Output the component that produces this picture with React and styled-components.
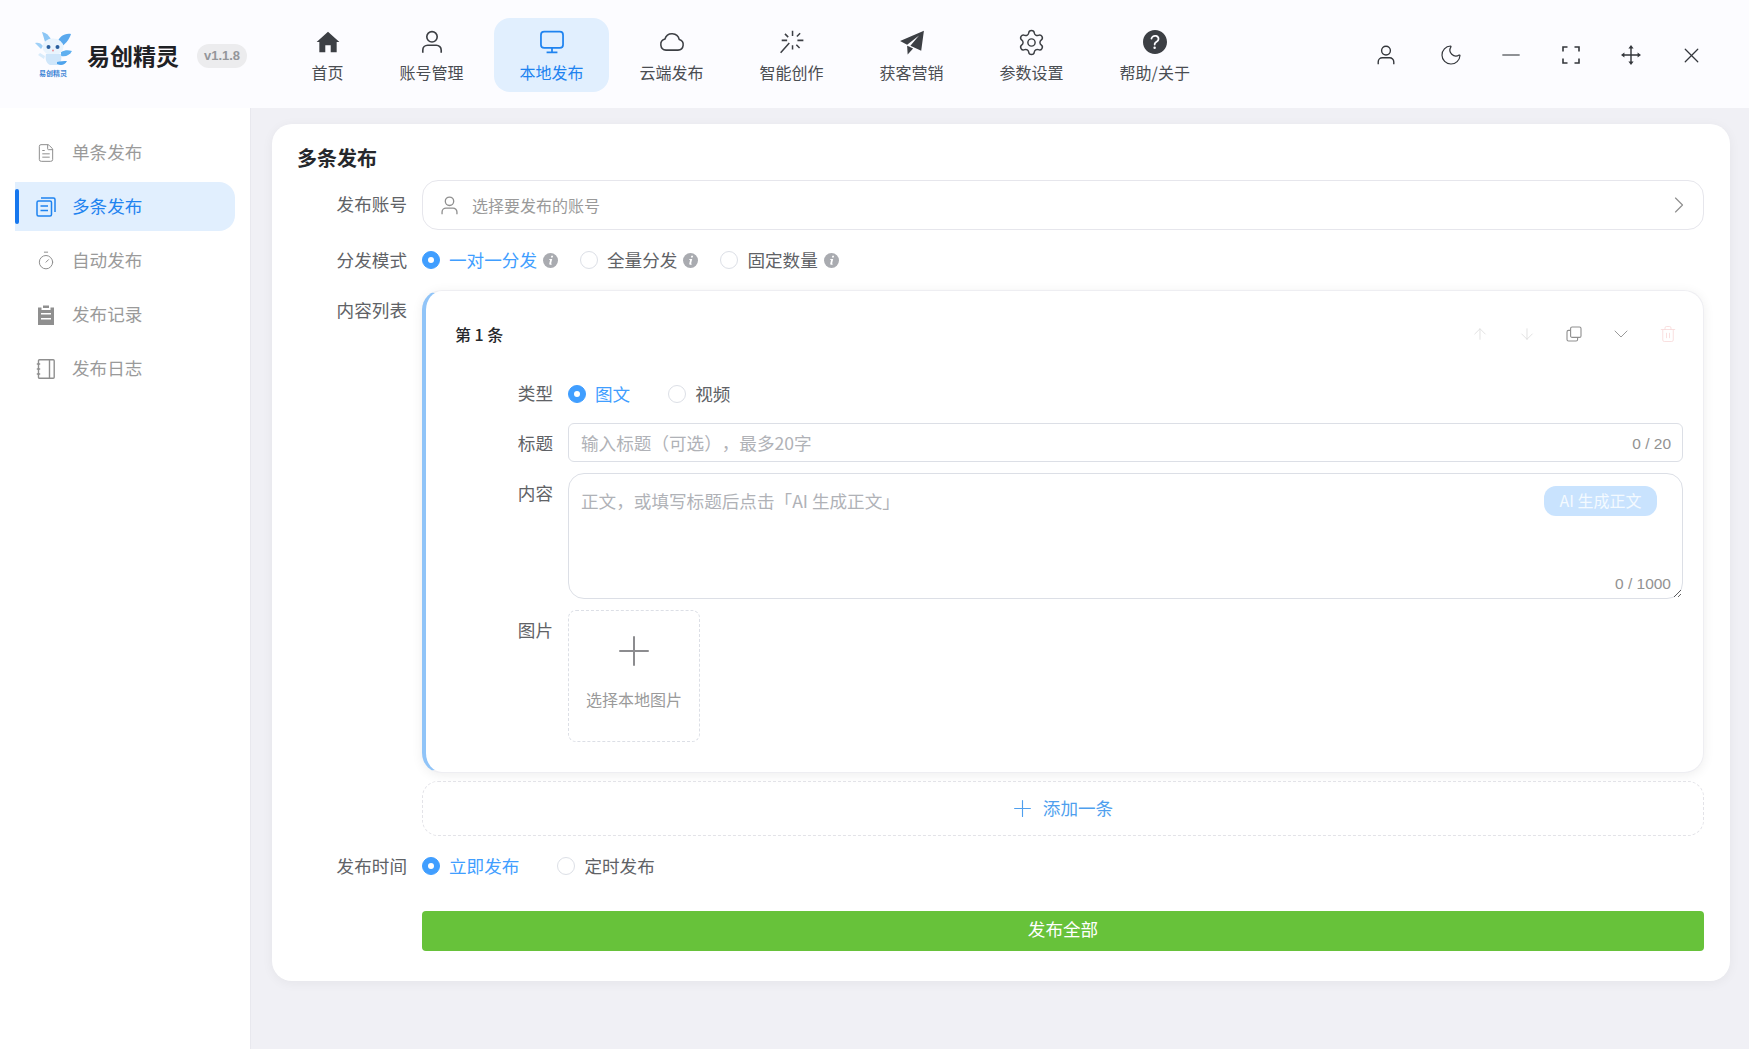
import React from "react";
import styled, { createGlobalStyle } from "styled-components";
import {
  ArrowDown,
  ArrowUp,
  ChevronDown,
  ChevronRight,
  FileText,
  Minus,
  Moon,
  Plus,
  Settings,
  Timer,
  Trash2,
  X,
} from "lucide-react";
import { IoHelpCircle } from "react-icons/io5";

const FONT = `"Noto Sans CJK SC", "Noto Sans", sans-serif`;

const GlobalStyle = createGlobalStyle`
  html, body { margin: 0; padding: 0; height: 100%; }
  body { font-family: ${FONT}; background: #f0f0f5; overflow: hidden; }
  #root { height: 100%; }
  * { box-sizing: border-box; }
`;

// drawn icons that the packages don't have
const HomeIcon = () => (
  <svg width="26" height="26" viewBox="0 0 24 24" fill="#3c3f44">
    <path d="M12 2.5 22.5 12 20 12V21.5H14.5V15H9.5V21.5H4V12H1.5Z" />
  </svg>
);

const UserIcon = ({ size = 26, color = "#3c3f44" }) => (
  <svg width={size} height={size} viewBox="0 0 24 24" fill="none" stroke={color} strokeWidth="1.5">
    <circle cx="12" cy="7.2" r="4.8" />
    <path d="M3.5 22v-2.5a4.5 4.5 0 0 1 4.5-4.5h8a4.5 4.5 0 0 1 4.5 4.5V22" />
  </svg>
);

const MonitorIcon = () => (
  <svg width="26" height="26" viewBox="0 0 24 24" fill="none" stroke="#1e83f0" strokeWidth="1.6">
    <rect x="1.8" y="2.5" width="20.4" height="15" rx="3" />
    <path d="M12 17.5v4M7 21.5h10" />
  </svg>
);

const CloudIcon = () => (
  <svg width="26" height="26" viewBox="0 0 24 24" fill="none" stroke="#3c3f44" strokeWidth="1.4">
    <path d="M6.5 19.5h11a5 5 0 0 0 1.2-9.8 6.8 6.8 0 0 0-13.2-.4A5.2 5.2 0 0 0 6.5 19.5Z" />
  </svg>
);

const SparkIcon = () => (
  <svg width="26" height="26" viewBox="0 0 24 24" fill="none" stroke="#3c3f44" strokeWidth="1.4">
    <path d="M12.5 1.5v5M12.5 15v4M2.5 10.5h5M17 10.5h5.5M5.5 4.5l3 3M19.5 4l-3 3M16 14.5l3 3M9.5 13 1.5 22" />
  </svg>
);

const PlaneIcon = () => (
  <svg width="26" height="26" viewBox="0 0 24 24" fill="#3c3f44">
    <path d="M23 1.5 1 11l6.5 3.5L18.5 6 10.5 15.5l10 4.5Z" />
    <path d="M7.5 15.5 8 23.5l5-5.5-3.8-1.8Z" />
  </svg>
);

const CopiesIcon = ({ color }) => (
  <svg width="20" height="20" viewBox="0 0 20 20" fill="none" stroke={color} strokeWidth="1.5">
    <rect x="1" y="4" width="14.5" height="15" rx="1.5" />
    <path d="M5 1h12.5a1.5 1.5 0 0 1 1.5 1.5V15M4.5 9h7.5M4.5 13.5h7.5" />
  </svg>
);

const ClipboardIcon = ({ color }) => (
  <svg width="20" height="20" viewBox="0 0 20 20" fill={color}>
    <path d="M7 0.5h6V3h-6Z" />
    <path d="M2 2.5h3.5V5h9V2.5H18V20H2ZM5 8v1.6h10V8ZM5 13v1.6h10V13Z" fillRule="evenodd" />
  </svg>
);

const NotebookIcon = ({ color }) => (
  <svg width="20" height="20" viewBox="0 0 20 20" fill="none" stroke={color} strokeWidth="1.4">
    <rect x="2.5" y="0.8" width="15.7" height="18.4" rx="1" />
    <path d="M13.5 0.8v18.4M0.8 5h3.4M0.8 10h3.4M0.8 15h3.4" />
  </svg>
);

const CornersIcon = () => (
  <svg width="20" height="20" viewBox="0 0 20 20" fill="none" stroke="#33363b" strokeWidth="1.6">
    <path d="M2 6.5V2h4.5M13.5 2H18v4.5M18 13.5V18h-4.5M6.5 18H2v-4.5" />
  </svg>
);

const MoveIcon = () => (
  <svg width="20" height="20" viewBox="0 0 20 20" fill="#33363b" stroke="none">
    <path d="M9.3 3h1.4v6.3H17v1.4h-6.3V17H9.3v-6.3H3V9.3h6.3Z" />
    <path d="M10 0l2.6 3.4H7.4ZM10 20l-2.6-3.4h5.2ZM0 10l3.4-2.6v5.2ZM20 10l-3.4 2.6V7.4Z" />
  </svg>
);

const DuplicateIcon = () => (
  <svg width="16" height="16" viewBox="0 0 16 16" fill="none" stroke="#8f8f8f" strokeWidth="1.1">
    <rect x="4.6" y="1" width="10.4" height="10.4" rx="1.5" />
    <path d="M4.6 4.4H2.5A1.5 1.5 0 0 0 1 5.9v7.6A1.5 1.5 0 0 0 2.5 15h7.6a1.5 1.5 0 0 0 1.5-1.5v-2.1" />
  </svg>
);

const InfoIcon = () => (
  <svg width="15" height="15" viewBox="0 0 15 15">
    <circle cx="7.5" cy="7.5" r="7.5" fill="#a9abb0" />
    <path d="M8.3 2.8h1.8l-.4 1.8H7.9ZM7.4 5.9h1.8l-1.1 4.6c-.1.4.3.4.8.1l-.2.9c-1 .6-2.7.6-2.4-.9l.8-3.5h-.9l.2-1.1Z" fill="#fff" />
  </svg>
);

const LogoMascot = () => (
  <svg width="40" height="38" viewBox="0 0 40 38">
    <path d="M13 15 9 2c5 1 9 5 10 11Z" fill="#8cc6f5" />
    <path d="M24 13c2-6 7-10 14-9-2 6-6 11-11 13Z" fill="#5aa9ee" />
    <path d="M8 19 2 13c3-1 6 0 8 3Z" fill="#9fd0f7" />
    <path d="M28 22c4-2 7-2 11-1-2 4-6 6-11 5Z" fill="#5fb0f0" />
    <ellipse cx="20" cy="17" rx="10.5" ry="8.5" fill="#e9f4fd" />
    <path d="M13 24c-1 5 0 9 4 11h7c4-2 5-6 4-11Z" fill="#cfe6fa" />
    <path d="M24 34c4 2 8 1 10-3-3 0-7 0-10 1Z" fill="#4ea3ec" />
    <path d="M12 26 7 23l-2 2 6 4Z" fill="#d9ecfb" />
    <circle cx="15.5" cy="17" r="2" fill="#2a5f9e" />
    <circle cx="24.5" cy="17" r="2" fill="#2a5f9e" />
    <circle cx="20" cy="20.5" r="0.9" fill="#e9868e" />
  </svg>
);

const NAV = [
  { label: "首页", icon: <HomeIcon /> },
  { label: "账号管理", icon: <UserIcon /> },
  { label: "本地发布", icon: <MonitorIcon />, active: true },
  { label: "云端发布", icon: <CloudIcon /> },
  { label: "智能创作", icon: <SparkIcon /> },
  { label: "获客营销", icon: <PlaneIcon /> },
  { label: "参数设置", icon: <Settings size={29} strokeWidth={1.2} color="#3c3f44" /> },
  { label: "帮助/关于", icon: <IoHelpCircle size={32} color="#3c3f44" /> },
];

const SIDE = [
  { label: "单条发布", Icon: ({ color }) => <FileText size={26} strokeWidth={1.2} color={color} /> },
  { label: "多条发布", Icon: CopiesIcon, active: true },
  { label: "自动发布", Icon: ({ color }) => <Timer size={27} strokeWidth={1.2} color={color} /> },
  { label: "发布记录", Icon: ClipboardIcon },
  { label: "发布日志", Icon: NotebookIcon },
];

const Page = styled.div`
  width: 100%;
  height: 100vh;
  display: flex;
  flex-direction: column;
`;

const Header = styled.header`
  height: 108px;
  flex: none;
  display: flex;
  align-items: center;
  padding: 0 28px 0 33px;
  background: #fcfcff;
`;

const Brand = styled.div`
  width: 253px;
  flex: none;
  display: flex;
  align-items: center;
`;

const Logo = styled.div`
  width: 40px;
  display: flex;
  flex-direction: column;
  align-items: center;
`;

const LogoCaption = styled.span`
  font-size: 7px;
  line-height: 10px;
  font-weight: 700;
  color: #3f86d6;
  white-space: nowrap;
`;

const BrandName = styled.span`
  margin: 2px 0 0 14px;
  font-size: 23px;
  font-weight: 700;
  color: #1f2125;
  white-space: nowrap;
`;

const Version = styled.span`
  margin: 3px 0 0 18px;
  width: 50px;
  height: 24px;
  border-radius: 12px;
  background: #ececee;
  color: #94969a;
  font: 700 13px/24px "Liberation Sans", sans-serif;
  text-align: center;
`;

const Nav = styled.nav`
  margin-top: 2px;
  display: flex;
  gap: 5px;
`;

const NavItem = styled.div`
  height: 74px;
  padding: 9px 25.5px 0;
  border-radius: 16px;
  display: flex;
  flex-direction: column;
  align-items: center;
  background: ${(p) => (p.$active ? "#e1effe" : "transparent")};
  color: ${(p) => (p.$active ? "#1e83f0" : "#4a4d52")};
`;

const NavIcon = styled.span`
  height: 30px;
  display: flex;
  align-items: center;
  justify-content: center;
`;

const NavLabel = styled.span`
  margin-top: 3px;
  font-size: 16px;
  line-height: 24px;
  white-space: nowrap;
`;

const Tools = styled.div`
  margin: 2px 0 0 auto;
  display: flex;
`;

const Tool = styled.span`
  width: 60px;
  height: 40px;
  display: flex;
  align-items: center;
  justify-content: center;
  margin-right: ${(p) => p.$after ?? 0}px;
`;

const Body = styled.div`
  flex: 1;
  min-height: 0;
  display: flex;
`;

const Sidebar = styled.aside`
  width: 251px;
  flex: none;
  padding: 20px 15px 0;
  display: flex;
  flex-direction: column;
  gap: 5px;
  background: #fff;
  border-right: 1px solid #e8e8ee;
`;

const SideItem = styled.div`
  position: relative;
  width: 220px;
  height: 49px;
  padding-left: 21px;
  display: flex;
  align-items: center;
  border-radius: 0 16px 16px 0;
  background: ${(p) => (p.$active ? "#e1effe" : "transparent")};
  color: ${(p) => (p.$active ? "#1e83f0" : "#9a9a9a")};

  &::before {
    content: "";
    display: ${(p) => (p.$active ? "block" : "none")};
    position: absolute;
    left: 0;
    top: 7px;
    bottom: 7px;
    width: 4px;
    border-radius: 2px;
    background: #1677ee;
  }
`;

const SideIcon = styled.span`
  width: 20px;
  display: flex;
  justify-content: center;
`;

const SideLabel = styled.span`
  margin-left: 16px;
  padding-bottom: 2px;
  font-size: 17.6px;
`;

const Main = styled.main`
  flex: 1;
  min-width: 0;
  padding: 16px 19px 0 21px;
`;

const Card = styled.section`
  height: 857px;
  padding: 20px 26px 0 25px;
  border-radius: 20px;
  background: #fff;
  box-shadow: 0 2px 12px rgba(0, 0, 0, 0.05);
`;

const CardTitle = styled.h2`
  margin: 0 0 8px;
  font-size: 20px;
  line-height: 28px;
  font-weight: 700;
  color: #26282c;
`;

const Field = styled.div`
  display: grid;
  grid-template-columns: 110px 1fr;
  column-gap: 15px;
  margin-bottom: ${(p) => p.$after ?? 15}px;
`;

const FieldLabel = styled.label`
  font-size: 17.6px;
  line-height: ${(p) => p.$line ?? 48}px;
  text-align: right;
  color: #606266;
`;

const Picker = styled.div`
  height: 50px;
  padding: 0 10px 0 16px;
  display: flex;
  align-items: center;
  border: 1px solid #e6e6ec;
  border-radius: 16px;
  color: #9a9a9a;
  font-size: 16px;
`;

const PickerText = styled.span`
  margin-left: 12px;
  flex: 1;
`;

const RadioRow = styled.div`
  height: 30px;
  display: flex;
  align-items: center;
`;

const Option = styled.div`
  display: flex;
  align-items: center;
  margin-right: ${(p) => p.$gap ?? 38}px;
  font-size: 17.6px;
  color: ${(p) => (p.$on ? "#409eff" : "#606266")};
`;

const OptionText = styled.span`
  padding-bottom: 2px;
`;

const RadioDot = styled.span`
  width: 18px;
  height: 18px;
  margin-right: 9px;
  border-radius: 50%;
  flex: none;
  background: ${(p) => (p.$on ? "#409eff" : "#fff")};
  border: 1px solid ${(p) => (p.$on ? "#409eff" : "#dcdfe6")};
  display: flex;
  align-items: center;
  justify-content: center;

  &::after {
    content: "";
    width: 6px;
    height: 6px;
    border-radius: 50%;
    background: #fff;
  }
`;

const OptionInfo = styled.span`
  margin-left: 6px;
  display: flex;
`;

const ItemCard = styled.div`
  height: 483px;
  padding: 28px 20px 0 29px;
  border: 1px solid #eeeef2;
  border-left: 4px solid #90c4f8;
  border-radius: 20px;
  background: #fff;
  box-shadow: 0 2px 12px rgba(0, 0, 0, 0.07);
`;

const ItemHead = styled.div`
  height: 30px;
  margin-bottom: 30px;
  display: flex;
  align-items: center;
  justify-content: space-between;
`;

const ItemTitle = styled.span`
  font-size: 16px;
  font-weight: 500;
  color: #26282c;
`;

const ItemTools = styled.div`
  margin-right: -8px;
  display: flex;
`;

const ItemTool = styled.span`
  width: 47px;
  height: 24px;
  display: flex;
  align-items: center;
  justify-content: center;
`;

const ItemRow = styled.div`
  margin-left: 58px;
  margin-bottom: ${(p) => p.$after ?? 10}px;
  display: grid;
  grid-template-columns: 40px 1fr;
  column-gap: 15px;
`;

const ItemLabel = styled.label`
  font-size: 17.6px;
  line-height: ${(p) => p.$line ?? 40}px;
  text-align: right;
  color: #606266;
  white-space: nowrap;
`;

const InputWrap = styled.div`
  position: relative;
`;

const TitleInput = styled.input`
  display: block;
  width: 100%;
  height: 39px;
  padding: 0 80px 0 12px;
  border: 1px solid #dcdfe6;
  border-radius: 6px;
  outline: none;
  font: 17.6px ${FONT};
  text-spacing-trim: space-all;

  &::placeholder {
    color: #b0b2b7;
  }
`;

const Counter = styled.span`
  position: absolute;
  right: 12px;
  bottom: ${(p) => p.$bottom}px;
  font: 15.5px/18px "Liberation Sans", sans-serif;
  color: #929292;
`;

const BodyInput = styled.textarea`
  display: block;
  width: 100%;
  height: 126px;
  padding: 14px 12px;
  border: 1px solid #dcdfe6;
  border-radius: 16px;
  outline: none;
  resize: vertical;
  font: 17.6px/26px ${FONT};

  &::placeholder {
    color: #b0b2b7;
  }
`;

const AiButton = styled.span`
  position: absolute;
  top: 13px;
  right: 26px;
  width: 113px;
  height: 30px;
  border-radius: 12px;
  background: #c9e3fe;
  color: #f4faff;
  font-size: 16px;
  line-height: 29px;
  text-align: center;
  white-space: nowrap;
`;

const Uploader = styled.div`
  width: 132px;
  height: 132px;
  padding-top: 16px;
  display: flex;
  flex-direction: column;
  align-items: center;
  border: 1px dashed #dcdfe6;
  border-radius: 8px;
  color: #8c8c8f;
`;

const UploaderText = styled.span`
  margin-top: 12px;
  font-size: 16px;
  line-height: 24px;
  color: #9a9a9a;
`;

const AddRow = styled.div`
  height: 55px;
  padding-right: 4px;
  display: flex;
  align-items: center;
  justify-content: center;
  gap: 7px;
  border: 1px dashed #e3e3e8;
  border-radius: 16px;
  color: #4f9fee;
  font-size: 17.6px;
`;

const AddText = styled.span`
  padding-bottom: 2px;
`;

const PublishButton = styled.button`
  grid-column: 2;
  height: 40px;
  padding: 0 0 5px;
  border: none;
  border-radius: 4px;
  background: #67c23a;
  color: #fff;
  font: 17.6px ${FONT};
`;

const IconBox = styled.span`
  display: flex;
`;

const Radio = ({ on, children, gap, info }) => (
  <Option $on={on} $gap={gap}>
    <RadioDot $on={on} />
    <OptionText>{children}</OptionText>
    {info && (
      <OptionInfo>
        <InfoIcon />
      </OptionInfo>
    )}
  </Option>
);

const App = () => {
  return (
    <Page>
      <GlobalStyle />
      <Header>
        <Brand>
          <Logo>
            <LogoMascot />
            <LogoCaption>易创精灵</LogoCaption>
          </Logo>
          <BrandName>易创精灵</BrandName>
          <Version>v1.1.8</Version>
        </Brand>
        <Nav>
          {NAV.map((item) => (
            <NavItem key={item.label} $active={item.active}>
              <NavIcon>{item.icon}</NavIcon>
              <NavLabel>{item.label}</NavLabel>
            </NavItem>
          ))}
        </Nav>
        <Tools>
          <Tool $after={5}>
            <UserIcon size={22} color="#33363b" />
          </Tool>
          <Tool>
            <Moon size={24} strokeWidth={1.2} color="#33363b" />
          </Tool>
          <Tool>
            <Minus size={28} strokeWidth={1.2} color="#6b6e73" />
          </Tool>
          <Tool>
            <CornersIcon />
          </Tool>
          <Tool>
            <MoveIcon />
          </Tool>
          <Tool>
            <X size={25} strokeWidth={1.2} color="#33363b" />
          </Tool>
        </Tools>
      </Header>
      <Body>
        <Sidebar>
          {SIDE.map(({ label, Icon, active }) => (
            <SideItem key={label} $active={active}>
              <SideIcon>
                <Icon color={active ? "#1e83f0" : "#8f8f8f"} />
              </SideIcon>
              <SideLabel>{label}</SideLabel>
            </SideItem>
          ))}
        </Sidebar>
        <Main>
          <Card>
            <CardTitle>多条发布</CardTitle>
            <Field>
              <FieldLabel>发布账号</FieldLabel>
              <Picker>
                <UserIcon size={21} color="#8f8f8f" />
                <PickerText>选择要发布的账号</PickerText>
                <ChevronRight size={28} strokeWidth={1} color="#8f8f8f" />
              </Picker>
            </Field>
            <Field>
              <FieldLabel $line={30}>分发模式</FieldLabel>
              <RadioRow>
                <Radio on info gap={22}>
                  一对一分发
                </Radio>
                <Radio info gap={22}>
                  全量分发
                </Radio>
                <Radio info>固定数量</Radio>
              </RadioRow>
            </Field>
            <Field $after={8}>
              <FieldLabel $line={40}>内容列表</FieldLabel>
              <ItemCard>
                <ItemHead>
                  <ItemTitle>第 1 条</ItemTitle>
                  <ItemTools>
                    <ItemTool>
                      <ArrowUp size={18} strokeWidth={1.1} color="#dcdcdc" />
                    </ItemTool>
                    <ItemTool>
                      <ArrowDown size={18} strokeWidth={1.1} color="#dcdcdc" />
                    </ItemTool>
                    <ItemTool>
                      <DuplicateIcon />
                    </ItemTool>
                    <ItemTool>
                      <ChevronDown size={24} strokeWidth={0.9} color="#8f8f8f" />
                    </ItemTool>
                    <ItemTool>
                      <Trash2 size={18} strokeWidth={1.1} color="#f8d9d9" />
                    </ItemTool>
                  </ItemTools>
                </ItemHead>
                <ItemRow $after={14}>
                  <ItemLabel $line={28}>类型</ItemLabel>
                  <RadioRow>
                    <Radio on>图文</Radio>
                    <Radio>视频</Radio>
                  </RadioRow>
                </ItemRow>
                <ItemRow>
                  <ItemLabel>标题</ItemLabel>
                  <InputWrap>
                    <TitleInput placeholder="输入标题（可选），最多20字" />
                    <Counter $bottom={10}>0 / 20</Counter>
                  </InputWrap>
                </ItemRow>
                <ItemRow $after={11}>
                  <ItemLabel>内容</ItemLabel>
                  <InputWrap>
                    <BodyInput placeholder="正文，或填写标题后点击「AI 生成正文」" />
                    <AiButton>AI 生成正文</AiButton>
                    <Counter $bottom={6}>0 / 1000</Counter>
                  </InputWrap>
                </ItemRow>
                <ItemRow>
                  <ItemLabel>图片</ItemLabel>
                  <Uploader>
                    <Plus size={48} strokeWidth={1} />
                    <UploaderText>选择本地图片</UploaderText>
                  </Uploader>
                </ItemRow>
              </ItemCard>
            </Field>
            <Field $after={15}>
              <span />
              <AddRow>
                <IconBox>
                  <Plus size={27} strokeWidth={1} />
                </IconBox>
                <AddText>添加一条</AddText>
              </AddRow>
            </Field>
            <Field $after={30}>
              <FieldLabel $line={30}>发布时间</FieldLabel>
              <RadioRow>
                <Radio on>立即发布</Radio>
                <Radio>定时发布</Radio>
              </RadioRow>
            </Field>
            <Field>
              <PublishButton>发布全部</PublishButton>
            </Field>
          </Card>
        </Main>
      </Body>
    </Page>
  );
};

export default App;
